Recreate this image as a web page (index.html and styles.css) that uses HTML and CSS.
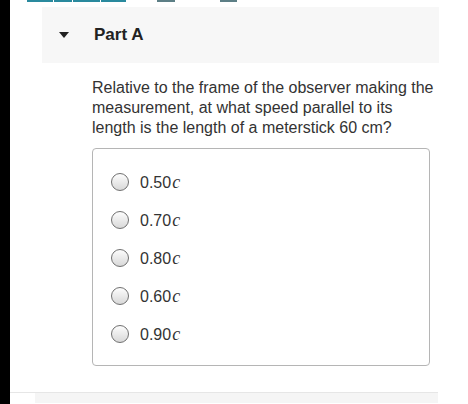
FILE: index.html
```html
<!DOCTYPE html>
<html lang="en">
<head>
    <meta charset="UTF-8">
    <meta name="viewport" content="width=device-width, initial-scale=1.0">
    <title>Part A</title>
    <link rel="stylesheet" href="styles.css">
</head>
<body>
    <div class="edge"></div>

    <div class="page">
        <!-- tail of the link row above -->
        <div class="top-links">
            <span class="link-line w1"></span>
            <span class="link-line w2"></span>
            <span class="link-line w3"></span>
            <span class="link-line w4"></span>
            <span class="link-dark w5"></span>
            <span class="link-dark w6"></span>
        </div>

        <div class="part-header">
            <span class="caret"></span>
            <h2 class="part-title">Part A</h2>
        </div>

        <div class="part-body">
            <p class="question">Relative to the frame of the observer making the measurement, at what speed parallel to its length is the length of a meterstick 60 cm?</p>

            <div class="choices">
                <label class="choice"><input type="radio" name="speed"> <span>0.50<i>c</i></span></label>
                <label class="choice"><input type="radio" name="speed"> <span>0.70<i>c</i></span></label>
                <label class="choice"><input type="radio" name="speed"> <span>0.80<i>c</i></span></label>
                <label class="choice"><input type="radio" name="speed"> <span>0.60<i>c</i></span></label>
                <label class="choice"><input type="radio" name="speed"> <span>0.90<i>c</i></span></label>
            </div>
        </div>

        <div class="next-part"></div>
    </div>
</body>
</html>
```

FILE: styles.css
```css
body {
    margin: 0;
    display: flex;
    height: 404px;
    overflow: hidden;
    font-family: "Liberation Sans", Arial, sans-serif;
    background-color: white;
    color: #333;
}

.edge {
    width: 10px;
    background-color: black;
    flex-shrink: 0;
}

.page {
    flex: 1;
    display: flex;
    flex-direction: column;
}

.top-links {
    display: flex;
    height: 2px;
    padding-left: 17px;
}

.link-line {
    height: 2px;
    background-color: #2a8a9e;
    margin-right: 1px;
}

.link-dark {
    height: 2px;
    background-color: #5d7f86;
}

.w1 { width: 26px; }
.w2 { width: 18px; }
.w3 { width: 27px; }
.w4 { width: 25px; }
.w5 { width: 18px; margin-left: 30px; }
.w6 { width: 17px; margin-left: 45px; }

.part-header {
    margin: 5px 0 0 32px;
    width: 397px;
    height: 56px;
    background-color: #f7f7f7;
    display: flex;
    align-items: center;
}

.caret {
    width: 0;
    height: 0;
    margin-left: 17px;
    margin-right: 25px;
    border-left: 5px solid transparent;
    border-right: 5px solid transparent;
    border-top: 6px solid #222;
}

.part-title {
    margin: 0;
    font-size: 17px;
    font-weight: bold;
    color: #222;
}

.part-body {
    padding-left: 82px;
}

.question {
    width: 345px;
    margin: 15px 0 10px;
    font-size: 16px;
    line-height: 20px;
    color: #333;
}

.choices {
    width: 300px;
    padding: 14px 18px 12px;
    border: 1px solid #b5b5b5;
    border-radius: 4px;
}

.choice {
    display: flex;
    align-items: center;
    height: 38px;
    font-size: 16px;
    color: #333;
}

.choice input {
    appearance: none;
    -webkit-appearance: none;
    margin: 0 11px 0 0;
    width: 18px;
    height: 18px;
    border: 1px solid #707070;
    border-radius: 50%;
    background: linear-gradient(#fdfdfd, #d8d8d8);
    box-sizing: border-box;
}

.choice i {
    font-family: "Liberation Serif", "Times New Roman", serif;
    font-size: 18px;
    padding-left: 1px;
}

.next-part {
    margin-top: 26px;
    border-top: 1px solid #e6e6e6;
    height: 10px;
    width: 428px;
    background: linear-gradient(to right, white 25px, #f5f5f5 25px);
}
```
